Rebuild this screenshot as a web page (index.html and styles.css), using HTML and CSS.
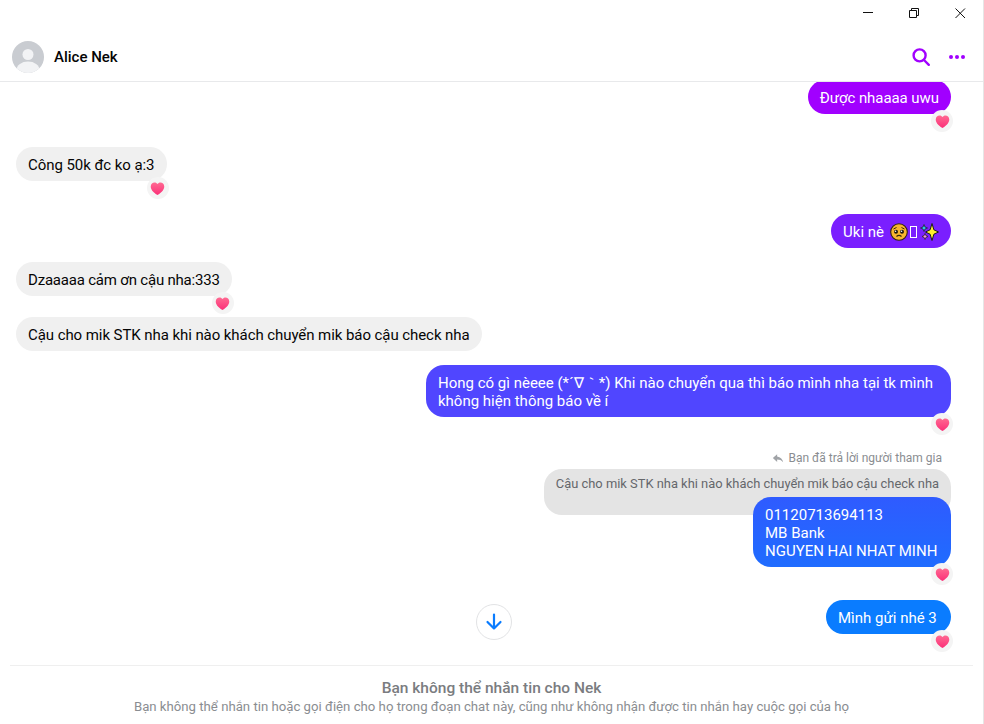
FILE: index.html
```html
<!DOCTYPE html>
<html lang="vi">
<head>
  <meta charset="UTF-8">
  <title>Alice Nek</title>
  <link rel="stylesheet" href="styles.css">
</head>
<body>
  <div class="window">

    <div class="titlebar">
      <svg class="win-btn" viewBox="0 0 11 11"><path d="M0 4.500h10"/></svg>
      <svg class="win-btn" viewBox="0 0 11 11"><path d="M.5 2.500h7v7h-7zM2.500 2.500v-2h7v7h-2"/></svg>
      <svg class="win-btn" viewBox="0 0 11 11"><path d="M.5 .5l9.500 9.500M10 .5L.5 10"/></svg>
    </div>

    <div class="header">
      <svg class="avatar" viewBox="0 0 32 32">
        <defs><clipPath id="avatarClip"><circle cx="16" cy="16" r="16"/></clipPath></defs>
        <circle cx="16" cy="16" r="16" fill="#c9ccd1"/>
        <g clip-path="url(#avatarClip)" fill="#f2f3f5">
          <circle cx="16" cy="13.500" r="5.500"/>
          <ellipse cx="16" cy="29" rx="11.500" ry="8.500"/>
        </g>
      </svg>
      <div class="name">Alice Nek</div>
      <svg class="head-icon" viewBox="0 0 20 20"><circle cx="8.600" cy="8.400" r="6" /><path d="M13 13l4.800 4.800"/></svg>
      <svg class="head-dots" viewBox="0 0 18 6"><circle cx="3" cy="3" r="2"/><circle cx="9" cy="3" r="2"/><circle cx="15" cy="3" r="2"/></svg>
    </div>

    <div class="messages">
      <div class="row me first">
        <div class="bubble c-purple">Được nhaaaa uwu<span class="react"><svg viewBox="0 0 16 16"><use href="#heart"/></svg></span></div>
      </div>

      <div class="row gap-l">
        <div class="bubble trim">Công 50k đc ko ạ:3<span class="react"><svg viewBox="0 0 16 16"><use href="#heart"/></svg></span></div>
      </div>

      <div class="row me gap-l">
        <div class="bubble c-violet">Uki nè<svg class="emoji face" viewBox="0 0 18 18">
            <circle cx="9" cy="9" r="8.300" fill="#f7b52e" stroke="#33240c" stroke-width="1.100"/>
            <path d="M3.500 6l3-1.500M14.500 6l-3-1.500" fill="none" stroke="#33240c" stroke-width="1"/>
            <circle cx="6" cy="8.800" r="2" fill="#1d1710"/>
            <circle cx="12" cy="8.800" r="2" fill="#1d1710"/>
            <circle cx="5.500" cy="8.200" r=".8" fill="#fff"/>
            <circle cx="11.500" cy="8.200" r=".8" fill="#fff"/>
            <path d="M6.500 13.500c1.500-1.300 3.500-1.300 5 0" fill="none" stroke="#33240c" stroke-width="1.200"/>
          </svg><span class="tofu"></span><svg class="emoji sparkle" viewBox="0 0 19 18">
            <path d="M12 .5l1.900 6.300 4.600 2.200-4.600 2.200L12 17.500l-1.900-6.300L5.500 9l4.600-2.200z" fill="#ffee2e" stroke="#1c1c1c" stroke-width="1"/>
            <path d="M4 1.500l1 2.500 2.500 1-2.500 1-1 2.500-1-2.500L.5 5 3 4z" fill="#2fc4ea" stroke="#1c1c1c" stroke-width=".7"/>
            <path d="M5 10.500l.9 2.100 2.100.9-2.100.9-.9 2.100-.9-2.100-2.100-.9 2.100-.9z" fill="#f59ad6" stroke="#1c1c1c" stroke-width=".7"/>
          </svg></div>
      </div>

      <div class="row">
        <div class="bubble tight">Dzaaaaa cảm ơn cậu nha:333<span class="react"><svg viewBox="0 0 16 16"><use href="#heart"/></svg></span></div>
      </div>

      <div class="row gap-m">
        <div class="bubble snug">Cậu cho mik STK nha khi nào khách chuyển mik báo cậu check nha</div>
      </div>

      <div class="row me">
        <div class="bubble c-indigo wide">Hong có gì nèeee (*´∇｀*) Khi nào chuyển qua thì báo mình nha tại tk mình không hiện thông báo về í<span class="react"><svg viewBox="0 0 16 16"><use href="#heart"/></svg></span></div>
      </div>

      <div class="reply-label">
        <svg viewBox="0 0 14 12"><path d="M6 1L1 5.500 6 10V7.200c3 0 5 .8 7 3.300-.5-3.500-3-6.200-7-6.700z"/></svg>
        Bạn đã trả lời người tham gia
      </div>
      <div class="reply-quote">Cậu cho mik STK nha khi nào khách chuyển mik báo cậu check nha</div>
      <div class="row me overlap">
        <div class="bubble c-blue">01120713694113<br>MB Bank<br>NGUYEN HAI NHAT MINH<span class="react"><svg viewBox="0 0 16 16"><use href="#heart"/></svg></span></div>
      </div>

      <div class="row me gap-l">
        <div class="bubble c-sky">Mình gửi nhé 3<span class="react"><svg viewBox="0 0 16 16"><use href="#heart"/></svg></span></div>
      </div>

      <div class="scroll-down">
        <svg viewBox="0 0 18 18"><path d="M9 1.500v14M2.500 9L9 15.500 15.500 9"/></svg>
      </div>
    </div>

    <div class="footer">
      <div class="footer-title">Bạn không thể nhắn tin cho Nek</div>
      <div class="footer-sub">Bạn không thể nhắn tin hoặc gọi điện cho họ trong đoạn chat này, cũng như không nhận được tin nhắn hay cuộc gọi của họ</div>
    </div>

  </div>

  <svg class="defs" width="0" height="0">
    <defs>
      <linearGradient id="heartFill" x1="0" y1="0" x2="0" y2="1">
        <stop offset="0" stop-color="#ff6a92"/>
        <stop offset="1" stop-color="#fb2f78"/>
      </linearGradient>
      <path id="heart" fill="url(#heartFill)" d="M8 15C2.800 11.500.8 8.800.8 5.800.8 3.200 2.800 1.500 4.900 1.500 6.200 1.500 7.300 2.100 8 3.200c.7-1.100 1.800-1.700 3.100-1.700 2.100 0 4.100 1.700 4.100 4.300 0 3-2 5.700-7.200 9.200z"/>
    </defs>
  </svg>
</body>
</html>
```

FILE: styles.css
```css
* {
  box-sizing: border-box;
}

body {
  margin: 0;
  background: #fff;
  color: #050505;
  font-family: 'Roboto', 'Noto Sans', sans-serif;
  overflow: hidden;
}

.window {
  display: flex;
  flex-direction: column;
  height: 724px;
  border-right: 1px solid #e6e6e6;
}

/* title bar */
.titlebar {
  display: flex;
  justify-content: flex-end;
  gap: 35px;
  height: 26px;
  padding: 8px 17px 0 0;
}

.win-btn {
  width: 11px;
  height: 11px;
  fill: none;
  stroke: #111;
  stroke-width: 1;
}

/* header */
.header {
  display: flex;
  align-items: center;
  height: 56px;
  padding: 7px 17px 0 12px;
  border-bottom: 1px solid #e8e9eb;
}

.avatar {
  width: 32px;
  height: 32px;
}

.name {
  flex: 1;
  margin-left: 10px;
  font-size: 15px;
  font-weight: 500;
}

.head-icon {
  width: 20px;
  height: 20px;
  fill: none;
  stroke: #a100ff;
  stroke-width: 2.400;
  stroke-linecap: round;
}

.head-dots {
  width: 18px;
  height: 6px;
  margin-left: 17px;
  fill: #a100ff;
}

/* messages */
.messages {
  position: relative;
  flex: 1;
  min-height: 0;
  padding: 0 32px 0 16px;
  overflow: hidden;
}

.row {
  display: flex;
  margin-top: 14px;
}

.row.me {
  justify-content: flex-end;
}

.row.first {
  margin-top: -2px;
}

.row.gap-m {
  margin-top: 21px;
}

.row.gap-l {
  margin-top: 33px;
}

.row.overlap {
  margin-top: -18px;
}

.bubble {
  position: relative;
  padding: 9px 12px 7px;
  border-radius: 17px;
  background: #f0f0f0;
  font-size: 15px;
  line-height: 18px;
}

.bubble.wide {
  width: 525px;
  border-radius: 18px;
}

.bubble.tight {
  letter-spacing: -0.2px;
}

.bubble.snug {
  letter-spacing: -0.07px;
}

.bubble.trim {
  letter-spacing: -0.06px;
}

.c-purple { background: #a100ff; color: #fff; letter-spacing: -0.06px; }
.c-violet { background: #7a1fff; color: #fff; }
.c-indigo { background: #5046ff; color: #fff; }
.c-blue { min-width: 198px; background: linear-gradient(#2f5bff, #1f6cff); color: #fff; border-radius: 18px; }
.c-sky { min-width: 125px; background: #0a7cff; color: #fff; }

.react {
  position: absolute;
  right: -2px;
  bottom: -18px;
  display: flex;
  align-items: center;
  justify-content: center;
  width: 22px;
  height: 22px;
  border-radius: 50%;
  background: #f4f4f4;
}

.react svg {
  width: 15px;
  height: 15px;
}

.emoji {
  width: 18px;
  height: 18px;
  vertical-align: -4px;
}

.face {
  margin-left: 6px;
}

.sparkle {
  width: 19px;
  margin-left: 3px;
}

.tofu {
  display: inline-block;
  width: 7px;
  height: 12px;
  margin-left: 2px;
  border: 1px solid #fff;
  vertical-align: -1px;
}

/* reply */
.reply-label {
  display: flex;
  justify-content: flex-end;
  align-items: center;
  gap: 4px;
  margin-top: 33px;
  padding-right: 9px;
  height: 16px;
  font-size: 12px;
  color: #8a8d91;
}

.reply-label svg {
  width: 12px;
  height: 11px;
  fill: #a0a3a7;
}

.reply-quote {
  width: fit-content;
  margin: 3px 0 0 auto;
  padding: 7px 12px 0;
  height: 46px;
  border-radius: 18px;
  background: #e4e4e4;
  color: #65676b;
  font-size: 12.900px;
  line-height: 16px;
}

/* scroll button */
.scroll-down {
  position: absolute;
  left: 476px;
  bottom: 25px;
  display: flex;
  align-items: center;
  justify-content: center;
  width: 36px;
  height: 36px;
  border: 1px solid #e2e3e5;
  border-radius: 50%;
  background: #fff;
}

.scroll-down svg {
  width: 18px;
  height: 18px;
  fill: none;
  stroke: #0a7cff;
  stroke-width: 2.200;
  stroke-linecap: round;
  stroke-linejoin: round;
}

/* footer */
.footer {
  height: 59px;
  margin: 0 10px;
  padding-top: 13px;
  border-top: 1px solid #efefef;
  text-align: center;
}

.footer-title {
  font-size: 15.500px;
  line-height: 18px;
  font-weight: 500;
  color: #7a7c80;
}

.footer-sub {
  margin-top: 1px;
  font-size: 13.200px;
  line-height: 18px;
  color: #8a8d91;
}

.defs {
  position: absolute;
}
```
